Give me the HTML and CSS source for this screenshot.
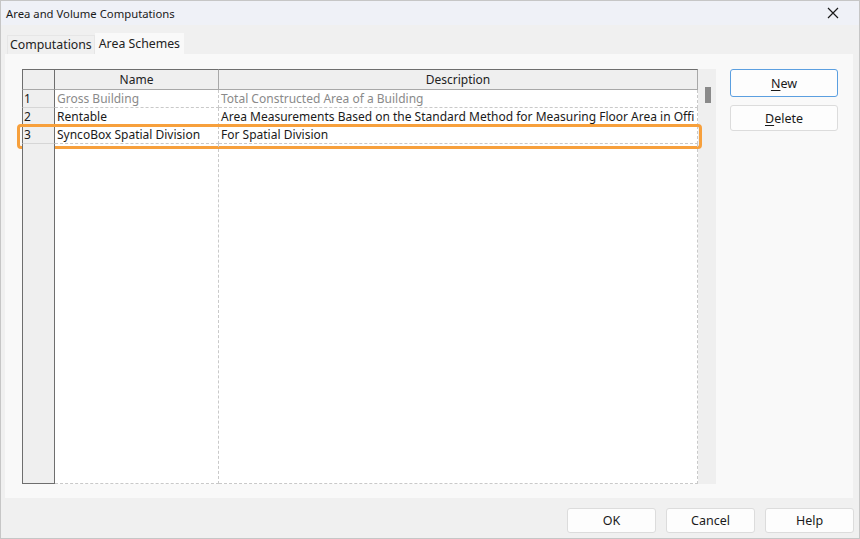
FILE: index.html
```html
<!DOCTYPE html>
<html lang="en">
<head>
    <meta charset="UTF-8">
    <title>Area and Volume Computations</title>
    <link rel="stylesheet" href="styles.css">
</head>
<body>
    <div class="dialog">
        <div class="titlebar">
            <span class="title">Area and Volume Computations</span>
            <svg class="close" width="12" height="12" viewBox="0 0 12 12">
                <path d="M1 1 L11 11 M11 1 L1 11" stroke="#1a1a1a" stroke-width="1.2" fill="none"/>
            </svg>
        </div>

        <div class="content">
            <div class="tabs">
                <div class="tab">Computations</div>
                <div class="tab active">Area Schemes</div>
            </div>

            <div class="panel">
                <div class="grid-wrap">
                    <div class="grid">
                        <div class="row head">
                            <div class="cell rh"></div>
                            <div class="cell name">Name</div>
                            <div class="cell desc">Description</div>
                        </div>
                        <div class="row dim">
                            <div class="cell rh">1</div>
                            <div class="cell name">Gross Building</div>
                            <div class="cell desc">Total Constructed Area of a Building</div>
                        </div>
                        <div class="row">
                            <div class="cell rh">2</div>
                            <div class="cell name">Rentable</div>
                            <div class="cell desc">Area Measurements Based on the Standard Method for Measuring Floor Area in Offi</div>
                        </div>
                        <div class="row marked">
                            <div class="cell rh">3</div>
                            <div class="cell name">SyncoBox Spatial Division</div>
                            <div class="cell desc">For Spatial Division</div>
                        </div>
                        <div class="row filler">
                            <div class="cell rh"></div>
                            <div class="cell name"></div>
                            <div class="cell desc"></div>
                        </div>
                    </div>
                    <div class="vscroll"><div class="thumb"></div></div>
                </div>

                <div class="side-buttons">
                    <button class="btn focused"><u>N</u>ew</button>
                    <button class="btn"><u>D</u>elete</button>
                </div>
            </div>
        </div>

        <div class="footer">
            <button class="btn">OK</button>
            <button class="btn">Cancel</button>
            <button class="btn">Help</button>
        </div>
    </div>
</body>
</html>
```

FILE: styles.css
```css
:root {
    --text: #1a1a1a;
    --dim: #8a8a8a;
    --bg: #f0f0f0;
    --panel: #f9f9f9;
    --grid-line: #c9c9c9;
    --dark-line: #6e6e6e;
    --orange: #f7a03c;
}

* {
    box-sizing: border-box;
}

body {
    margin: 0;
    font-family: "Noto Sans", "Open Sans", sans-serif;
    font-size: 12px;
    color: var(--text);
}

.dialog {
    width: 860px;
    height: 539px;
    border: 1px solid #c6c6c6;
    background: var(--bg);
    display: flex;
    flex-direction: column;
}

.titlebar {
    height: 24px;
    background: #eff1f7;
    display: flex;
    align-items: center;
    justify-content: space-between;
    padding: 0 20px 0 5px;
    font-size: 11.3px;
}

.close {
    display: block;
}

.content {
    padding: 8px 6px 0 4px;
}

.tabs {
    display: flex;
    align-items: flex-end;
    height: 21px;
    padding-left: 2px;
}

.tab {
    height: 19px;
    padding: 0 2px;
    line-height: 18px;
    font-size: 12.3px;
    color: #222;
    border: 1px solid #e6e6e6;
    border-bottom: none;
}

.tab.active {
    height: 21px;
    line-height: 19px;
    padding: 0 3px;
    background: var(--panel);
    border-color: var(--panel);
}

.panel {
    background: var(--panel);
    height: 444px;
    padding: 15px 15px 14px 17px;
    display: flex;
    gap: 14px;
}

.grid-wrap {
    flex: 1;
    min-width: 0;
    display: flex;
}

.grid {
    flex: 1;
    min-width: 0;
    display: flex;
    flex-direction: column;
    background: #fff;
}

.row {
    display: flex;
    height: 18px;
    position: relative;
}

.cell {
    height: 100%;
    padding: 0 2px;
    line-height: 17px;
    white-space: nowrap;
    overflow: hidden;
    border-right: 1px dashed var(--grid-line);
    border-bottom: 1px dashed var(--grid-line);
}

.cell.rh {
    width: 33px;
    flex: none;
    background: #efefef;
    border-left: 1px solid var(--dark-line);
    border-right: 1px solid var(--dark-line);
    border-bottom: 1px solid #d6d6d6;
    padding-left: 1px;
}

.cell.name {
    width: 164px;
    flex: none;
}

.cell.desc {
    flex: 1;
    min-width: 0;
}

.row.head {
    height: 21px;
}

.row.head .cell {
    background: #efefef;
    text-align: center;
    line-height: 20px;
    border-top: 1px solid var(--dark-line);
    border-bottom: 1px solid #a8a8a8;
    border-right: 1px solid #a8a8a8;
    color: #222;
}

.row.head .cell.rh {
    border-right: 1px solid var(--dark-line);
}

.row.dim .cell.name,
.row.dim .cell.desc {
    color: var(--dim);
}

.row.marked::after {
    content: "";
    position: absolute;
    left: -5px;
    top: -2px;
    right: -4px;
    bottom: -5px;
    border: 3px solid var(--orange);
    border-radius: 4px;
    pointer-events: none;
}

.row.filler {
    flex: 1;
    height: auto;
}

.row.filler .cell.rh {
    border-bottom: 1px solid var(--dark-line);
}

.vscroll {
    width: 18px;
    flex: none;
    background: #efefef;
    padding: 18px 0 0 7px;
}

.thumb {
    width: 6px;
    height: 16px;
    background: #8a8a8a;
}

.side-buttons {
    width: 108px;
    flex: none;
    display: flex;
    flex-direction: column;
    gap: 8px;
}

.btn {
    font-family: inherit;
    font-size: 12.5px;
    color: var(--text);
    background: #fdfdfd;
    border: 1px solid #dcdcdc;
    border-radius: 3px;
    height: 26px;
    padding: 0;
}

.btn u {
    text-underline-offset: 2px;
}

.btn.focused {
    height: 28px;
    border-color: #5b9fe0;
}

.footer {
    flex: 1;
    display: flex;
    justify-content: flex-end;
    align-items: flex-start;
    gap: 10px;
    padding: 10px 5px 0 0;
}

.footer .btn {
    width: 89px;
    height: 25px;
}
```
